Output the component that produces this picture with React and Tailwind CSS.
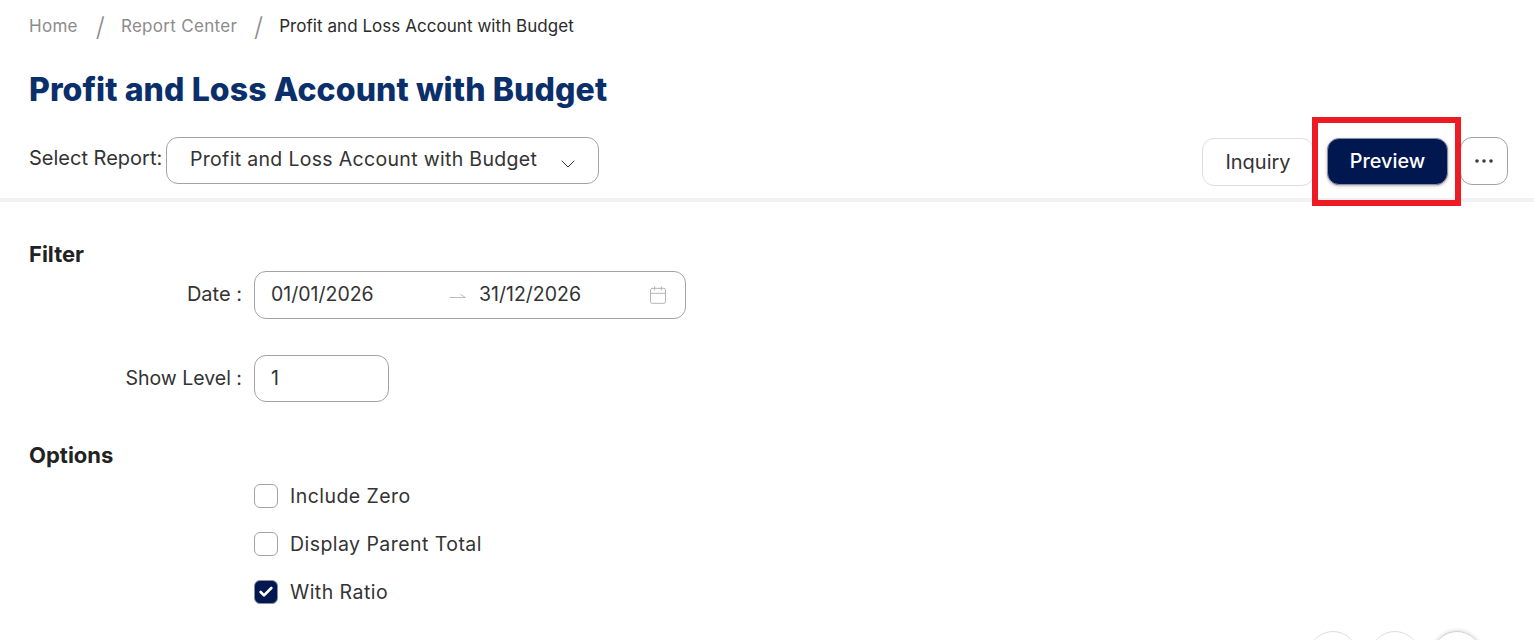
import { ChevronDown, Calendar, Ellipsis, Check } from 'lucide-react'

const font = "font-['Inter','Noto_Sans',sans-serif]"

function Option({ label, checked }) {
  return (
    <label className="flex h-6 items-center gap-3">
      <span className={checked
        ? 'flex h-6 w-6 items-center justify-center rounded-md border border-[#8a8fa3] bg-[#00174f]'
        : 'h-6 w-6 rounded-md border border-[#a3a3a3] bg-white'}>
        {checked && <Check size={16} strokeWidth={4} className="text-white" />}
      </span>
      <span className="text-[19.5px] leading-6 tracking-[0.45px] text-[#333]">{label}</span>
    </label>
  )
}

function HalfArrow() {
  return (
    <svg width="18" height="10" viewBox="0 0 18 10" fill="none" className="text-[#bdbdbd]">
      <path d="M0.5 7.5H16.5L11.5 4.5" stroke="currentColor" strokeWidth="1" />
    </svg>
  )
}

export default function App() {
  return (
    <div className={`${font} relative h-[640px] w-[1534px] overflow-hidden bg-white text-[#222]`}>
      {/* Breadcrumb */}
      <nav className="flex h-[54px] items-center pl-[29px] text-[17px] text-[#8c8c8c]">
        <span className="tracking-[0.3px]">Home</span>
        <span className="ml-[18px] mr-[16px] text-[26px] font-light leading-none">/</span>
        <span className="tracking-[0.3px]">Report Center</span>
        <span className="ml-[17px] mr-[16px] text-[26px] font-light leading-none">/</span>
        <span className="tracking-[0.05px] text-[#2b2b2b]">Profit and Loss Account with Budget</span>
      </nav>

      <h1 className="mt-[17px] h-[38px] pl-[29px] text-[32px] font-extrabold leading-[38px] tracking-[0.1px] text-[#0a2f6b]">
        Profit and Loss Account with Budget
      </h1>

      {/* Toolbar */}
      <div className="mt-[28px] flex h-[65px] items-start border-b-4 border-[#f2f2f2] pl-[29px] pr-[26px]">
        <span className="mt-[9px] w-[137px] text-[20px] leading-6 text-[#333]">Select Report:</span>
        <div className="flex h-[47px] w-[433px] items-center justify-between rounded-[12px] border border-[#a3a3a3] pl-[23px] pr-[18px]">
          <span className="pb-[2px] text-[19.5px] tracking-[0.32px] text-[#333]">Profit and Loss Account with Budget</span>
          <ChevronDown size={24} strokeWidth={1} className="mt-[7px] text-[#333]" />
        </div>
        <div className="ml-auto mt-[1px] flex items-start">
          <button className="h-[48px] w-[112px] rounded-[12px] border border-[#dedede] text-[20px] text-[#333]">Inquiry</button>
          <button className="ml-[13px] h-[47px] w-[121px] rounded-[12px] border border-[#8a8fa3] bg-[#00174f] text-[19.8px] font-medium text-white shadow-[0_1px_3px_rgba(0,0,0,0.3)]">Preview</button>
          <button className="-mt-px ml-[12px] flex h-[48px] w-[48px] items-center justify-center rounded-[12px] border border-[#a3a3a3] text-[#333]">
            <Ellipsis size={24} strokeWidth={1.5} />
          </button>
        </div>
      </div>

      {/* Filter */}
      <h2 className="mt-[38px] h-[28px] pl-[29px] text-[22px] font-bold leading-[28px] text-[#222]">Filter</h2>
      <div className="mt-[3px] flex items-center">
        <span className="-mt-[2px] w-[242px] text-right text-[20px] text-[#333]">Date :</span>
        <div className="ml-[12px] flex h-[48px] w-[432px] items-center rounded-[12px] border border-[#a3a3a3] pl-[16px] pr-[17px] text-[19.5px] text-[#333]">
          <span className="w-[178px]">01/01/2026</span>
          <HalfArrow />
          <span className="ml-[12px]">31/12/2026</span>
          <Calendar size={20} strokeWidth={1.1} className="ml-auto text-[#b0b0b0]" />
        </div>
      </div>
      <div className="mt-[36px] flex items-center">
        <span className="mt-px w-[242px] text-right text-[19.5px] text-[#333]">Show Level :</span>
        <div className="ml-[12px] flex h-[47px] w-[135px] items-center rounded-[12px] border border-[#a3a3a3] pl-[16px] text-[19.5px] text-[#333]">1</div>
      </div>

      {/* Options */}
      <h2 className="mt-[39px] h-[28px] pl-[29px] text-[22px] font-bold leading-[28px] text-[#222]">Options</h2>
      <div className="ml-[254px] mt-[15px] flex flex-col gap-6">
        <Option label="Include Zero" />
        <Option label="Display Parent Total" />
        <Option label="With Ratio" checked />
      </div>

      {/* Circles cut off by the bottom edge */}
      <div className="absolute left-[1308px] top-[631px] flex gap-3">
        <span className="h-[50px] w-[50px] rounded-full border border-[#dedede]" />
        <span className="h-[50px] w-[50px] rounded-full border border-[#dedede]" />
        <span className="h-[50px] w-[50px] rounded-full border border-[#d0d0d0] shadow-[0_0_4px_rgba(0,0,0,0.2)]" />
      </div>

      {/* Red highlight annotation */}
      <div className="pointer-events-none absolute left-[1312px] top-[117px] h-[89px] w-[149px] border-[6px] border-[#ed1c24]" />
    </div>
  )
}
